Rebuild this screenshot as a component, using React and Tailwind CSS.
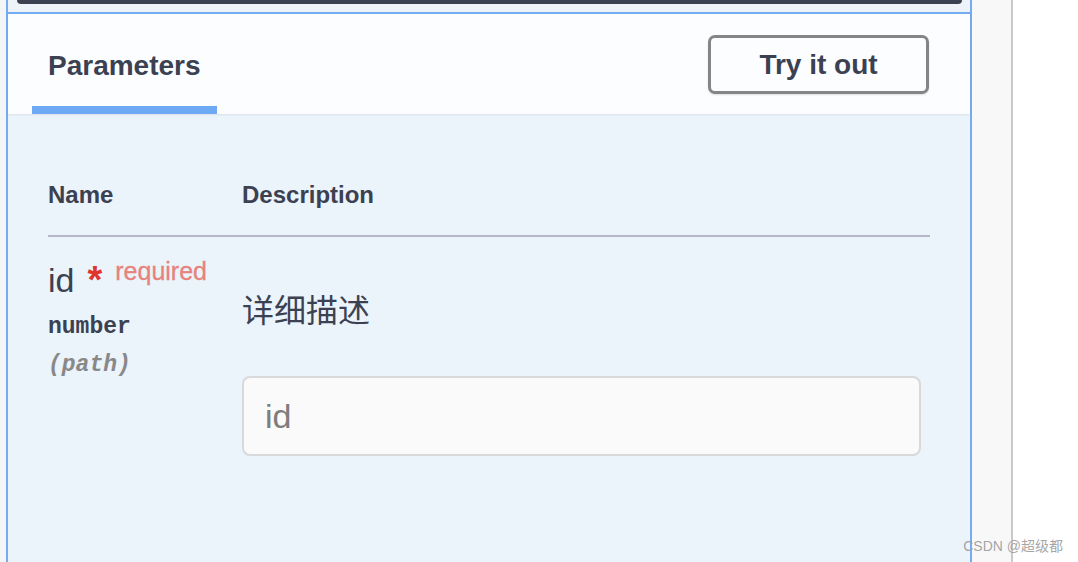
import React from 'react';

const sans = "font-['Liberation_Sans','Noto_Sans_CJK_SC',sans-serif]";
const mono = "font-['Liberation_Mono',monospace]";

export default function App() {
  return (
    <div className={`relative flex w-[1078px] h-[562px] overflow-hidden bg-white text-[#3b4151] ${sans}`}>
      <div className="w-[6px] bg-[#f4f5f7]" />

      {/* operation block */}
      <div className="w-[966px] flex flex-col border-x-2 border-[#74acf3] bg-[#ebf3fb]">
        <div className="h-[12px] bg-[#eef3fa] pl-[9px] pr-[8px]">
          <div className="h-[4px] rounded-b-[6px] bg-[#3b4151]" />
        </div>

        <div className="relative z-10 flex h-[102px] items-center justify-between border-t-2 border-[#74acf3] bg-[#fcfdfe] pl-[24px] pr-[41px] shadow-[0_1px_2px_rgba(0,0,0,0.08)]">
          <div className="flex h-full items-center border-b-[8px] border-[#6ea9f6] px-4 pt-[11px]">
            <span className="text-[28px] font-bold leading-7">Parameters</span>
          </div>
          <button className="h-[59px] w-[221px] rounded-[7px] border-[3px] border-[#858585] bg-[#fcfdfe] pt-[2px] text-[28px] font-bold leading-7 shadow-[0_1px_2px_rgba(0,0,0,0.12)]">
            Try it out
          </button>
        </div>

        <div className="flex-1 pl-[40px] pr-[40px] pt-[69px]">
          <div className="flex border-b-2 border-[#b5b8c6] pb-[28px] text-[24px] font-bold leading-6">
            <div className="w-[194px]">Name</div>
            <div>Description</div>
          </div>

          <div className="flex">
            <div className="w-[194px] pt-[26px]">
              <div className="whitespace-nowrap text-[34px] leading-[34px]">
                id
                <span className="relative top-[1px] ml-[13px] text-[38px] font-bold leading-[0px] text-[#e0352c]">*</span>
                <span className="relative -top-[12px] ml-[13px] text-[25px] leading-[0px] text-[#e6837c] [-webkit-text-stroke:0.3px_#e6837c]">required</span>
              </div>
              <div className={`mt-[18px] text-[23px] font-bold leading-6 ${mono}`}>number</div>
              <div className={`mt-[14px] text-[23px] font-bold italic leading-6 text-[#888888] ${mono}`}>(path)</div>
            </div>

            <div className="flex-1 pt-[58px]">
              <p className="text-[32px] leading-8">详细描述</p>
              <input
                readOnly
                placeholder="id"
                className={`mt-[49px] block h-[80px] w-[679px] rounded-[8px] border-2 border-[#d9d9d9] bg-[#fafafa] pl-[21px] text-[34px] outline-none placeholder:text-[#7d7d7d] ${sans}`}
              />
            </div>
          </div>
        </div>
      </div>

      <div className="w-[39px] bg-[#f8f8f8]" />
      <div className="w-[2px] bg-[#c9c9c9]" />
      <div className="flex-1 bg-white" />

      <div className="absolute bottom-[8px] right-[15px] text-[14px] leading-4 text-[#9a9a9a]/90">
        CSDN @超级都
      </div>
    </div>
  );
}
